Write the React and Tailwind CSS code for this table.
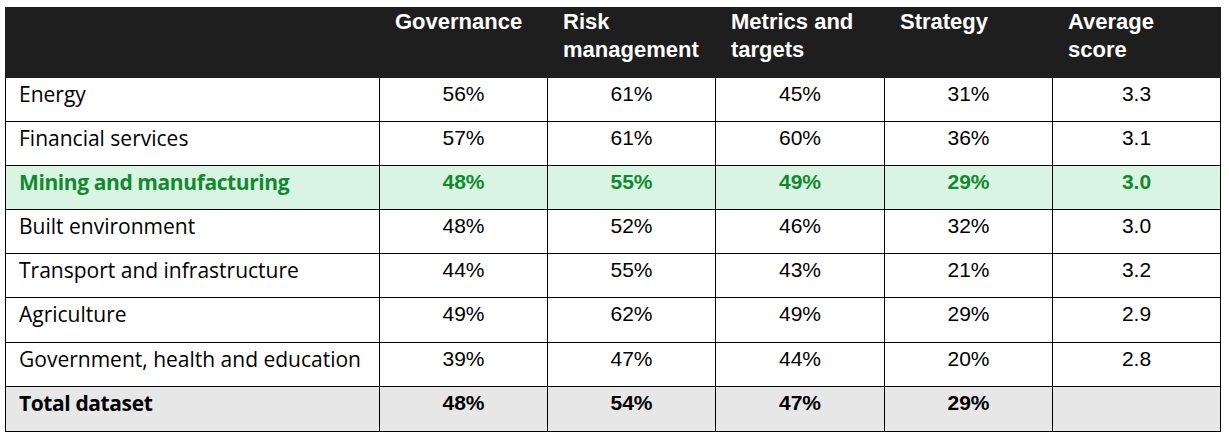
const COLS = ["Governance", "Risk management", "Metrics and targets", "Strategy", "Average score"];

const ROWS = [
  { name: "Energy", vals: ["56%", "61%", "45%", "31%", "3.3"], h: "h-[44px]" },
  { name: "Financial services", vals: ["57%", "61%", "60%", "36%", "3.1"], h: "h-[44px]" },
  { name: "Mining and manufacturing", vals: ["48%", "55%", "49%", "29%", "3.0"], h: "h-[44px]", kind: "hi" },
  { name: "Built environment", vals: ["48%", "52%", "46%", "32%", "3.0"], h: "h-[44px]" },
  { name: "Transport and infrastructure", vals: ["44%", "55%", "43%", "21%", "3.2"], h: "h-[44px]" },
  { name: "Agriculture", vals: ["49%", "62%", "49%", "29%", "2.9"], h: "h-[45px]" },
  { name: "Government, health and education", vals: ["39%", "47%", "44%", "20%", "2.8"], h: "h-[44px]" },
  { name: "Total dataset", vals: ["48%", "54%", "47%", "29%", ""], h: "h-[45px]", kind: "total" },
];

const GRID = "grid w-[1216px] grid-cols-[375px_168px_168px_169px_168px_168px]";

export default function App() {
  return (
    <div className="bg-white w-[1229px] h-[439px] pl-[5px] pt-[7px] font-['Liberation_Sans',Arial,sans-serif] text-[21px] leading-[28px] text-black">
      {/* header */}
      <div className={`${GRID} h-[71px] bg-[#1e1e1e] text-white font-bold text-[22px] leading-[28px]`}>
        <div />
        {COLS.map((c) => (
          <div key={c} className="pl-[15px] pr-2 pt-[1px]">
            {c}
          </div>
        ))}
      </div>

      {/* body */}
      {ROWS.map((r) => {
        const bg = r.kind === "hi" ? "bg-[#d9f4e2]" : r.kind === "total" ? "bg-[#e7e7e7]" : "bg-white";
        const txt = r.kind === "hi" ? "text-[#118a2d] font-bold" : r.kind === "total" ? "font-bold" : "";
        return (
          <div key={r.name} className={`${GRID} ${r.h} ${bg} ${txt}`}>
            <div className="border-l border-b border-r border-black pl-[13px] pt-[2px] font-['Open_Sans',sans-serif]">
              <span className={r.kind ? "tracking-[-0.4px]" : ""}>{r.name}</span>
            </div>
            {r.vals.map((v, i) => (
              <div key={i} className="border-b border-r border-black text-center pt-[2px]">
                {v}
              </div>
            ))}
          </div>
        );
      })}
    </div>
  );
}
